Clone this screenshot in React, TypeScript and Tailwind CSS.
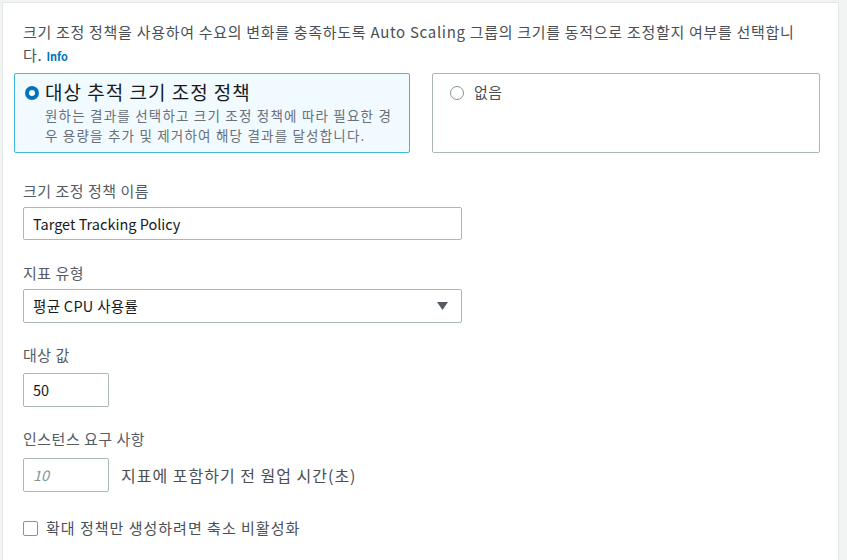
const font = { fontFamily: '"Noto Sans CJK KR", "Noto Sans", sans-serif' };

function Label({ children }: { children: React.ReactNode }) {
  return <div className="text-[15px] leading-[20px] tracking-[0.5px] text-[#545b64]">{children}</div>;
}

export default function App() {
  return (
    <div className="w-[847px] h-[560px] bg-[#f2f3f3] flex pt-[2px] pl-[2px] overflow-hidden" style={font}>
      <div className="w-[837px] h-[600px] bg-white border-l border-t border-r border-[#e4e7e7] pl-[11px] pr-[18px]">
        <p className="mt-[17px] ml-[9px] text-[15px] leading-[23px] tracking-[0.7px] text-[#4a4f56]">
          크기 조정 정책을 사용하여 수요의 변화를 충족하도록 Auto Scaling 그룹의 크기를 동적으로 조정할지 여부를 선택합니
          <br />
          다. <a className="text-[11px] font-bold tracking-normal text-[#0073bb]">Info</a>
        </p>

        <div className="mt-[5px] flex gap-[22px]">
          <div className="w-[396px] h-[80px] border border-[#44b9d6] bg-[#f1faff] rounded-[2px] pl-[10px] pt-[5px] flex gap-[6px]">
            <span className="mt-[7px] w-[14px] h-[14px] rounded-full border-[4px] border-[#0073bb] bg-white shrink-0" />
            <div>
              <div className="text-[19px] leading-[26px] tracking-[1px] text-[#16191f]">대상 추적 크기 조정 정책</div>
              <div className="text-[13.5px] leading-[20px] tracking-[1.2px] text-[#687078]">
                <div>원하는 결과를 선택하고 크기 조정 정책에 따라 필요한 경</div>
                <div>우 용량을 추가 및 제거하여 해당 결과를 달성합니다.</div>
              </div>
            </div>
          </div>
          <div className="w-[388px] h-[80px] border border-[#aab7b8] bg-white rounded-[2px] pl-[17px] pt-[7px] flex gap-[10px]">
            <span className="mt-[5px] w-[14px] h-[14px] rounded-full border border-[#879596] bg-white shrink-0" />
            <div className="text-[15px] leading-[22px] tracking-[0.5px] text-[#4a4f56]">없음</div>
          </div>
        </div>

        <div className="ml-[9px]">
          <div className="mt-[28px]">
            <Label>크기 조정 정책 이름</Label>
            <div className="mt-[6px] w-[439px] h-[33px] border border-[#aab7b8] rounded-[2px] flex items-center px-[9px] text-[14.5px] text-[#16191f]">
              Target Tracking Policy
            </div>
          </div>

          <div className="mt-[23px]">
            <Label>지표 유형</Label>
            <div className="mt-[6px] w-[439px] h-[34px] border border-[#aab7b8] rounded-[2px] flex items-center justify-between pl-[9px] pr-[13px] text-[14.5px] tracking-[0.3px] text-[#16191f]">
              <span>평균 CPU 사용률</span>
              <svg width="11" height="8" viewBox="0 0 11 8">
                <path d="M0 0h11L5.5 8z" fill="#545b64" />
              </svg>
            </div>
          </div>

          <div className="mt-[22px]">
            <Label>대상 값</Label>
            <div className="mt-[8px] w-[86px] h-[34px] border border-[#aab7b8] rounded-[2px] flex items-center px-[9px] text-[14.5px] text-[#16191f]">
              50
            </div>
          </div>

          <div className="mt-[22px]">
            <Label>인스턴스 요구 사항</Label>
            <div className="mt-[9px] flex items-center gap-[12px]">
              <div className="w-[86px] h-[34px] border border-[#aab7b8] rounded-[2px] flex items-center px-[9px] text-[14.5px] italic text-[#879596]">
                10
              </div>
              <span className="text-[16px] tracking-[1px] text-[#4a4f56]">지표에 포함하기 전 웜업 시간(초)</span>
            </div>
          </div>

          <label className="mt-[25px] flex items-center gap-[8px]">
            <span className="w-[15px] h-[15px] border border-[#879596] rounded-[2px] bg-white" />
            <span className="text-[15px] tracking-[1px] text-[#4a4f56]">확대 정책만 생성하려면 축소 비활성화</span>
          </label>
        </div>
      </div>
    </div>
  );
}
